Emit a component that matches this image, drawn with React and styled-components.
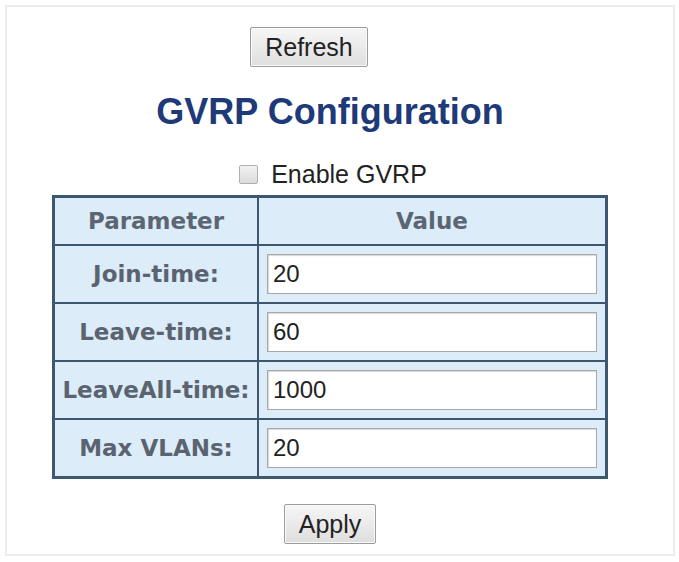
import React from "react";
import styled, { createGlobalStyle } from "styled-components";

const Global = createGlobalStyle`
  html, body { margin: 0; padding: 0; background: #ffffff; }
  body { font-family: "Liberation Sans", Arial, sans-serif; }
`;

const Frame = styled.div`
  box-sizing: border-box;
  margin: 5px 4px 0 5px;
  height: 551px;
  border: 2px solid #ececec;
  display: flex;
  flex-direction: column;
  align-items: center;
  padding-right: 20px;
`;

const Button = styled.button`
  box-sizing: border-box;
  height: 40px;
  padding: 0 14px;
  font-family: "Liberation Sans", Arial, sans-serif;
  font-size: 25px;
  color: #222;
  background: linear-gradient(#f6f6f6, #dedede);
  border: 1px solid #9c9c9c;
  border-radius: 2px;
  box-shadow: inset 0 0 0 1px #fafafa;
  margin-top: ${(p) => p.$top}px;
  margin-right: ${(p) => p.$shift || 0}px;
`;

const Title = styled.h1`
  margin: 25px 0 0 0;
  font-size: 36px;
  line-height: 40px;
  font-weight: bold;
  color: #1e3a78;
`;

const EnableRow = styled.label`
  display: flex;
  align-items: center;
  gap: 13px;
  margin-top: 27px;
  margin-left: 6px;
  font-size: 25px;
  line-height: 30px;
  color: #222;
`;

const Box = styled.span`
  box-sizing: border-box;
  width: 19px;
  height: 19px;
  border: 1px solid #b0b0b0;
  border-radius: 2px;
  background: linear-gradient(#f2f2f2, #dcdcdc);
`;

const Table = styled.table`
  margin-top: 6px;
  width: 556px;
  border-collapse: collapse;
  border: 3px solid #3d5770;
  background: #dcedf9;
  font-family: "DejaVu Sans", Verdana, sans-serif;
`;

const Head = styled.th`
  height: 46px;
  padding: 0;
  border: 2px solid #3d5770;
  font-size: 23px;
  font-weight: bold;
  color: #5c6673;
  width: ${(p) => p.$w || "auto"};
`;

const Label = styled.td`
  height: 56px;
  padding: 0;
  border: 2px solid #3d5770;
  text-align: center;
  font-size: 23px;
  font-weight: bold;
  color: #5a636f;
`;

const ValueCell = styled.td`
  padding: 0 8px;
  border: 2px solid #3d5770;
`;

const Field = styled.input`
  box-sizing: border-box;
  display: block;
  width: 100%;
  height: 40px;
  padding: 0 5px;
  font-family: "Liberation Sans", Arial, sans-serif;
  font-size: 24px;
  color: #222;
  background: #fff;
  border: 1px solid #a8a8a8;
  box-shadow: inset 1px 1px 1px #d8d8d8;
`;

const rows = [
  ["Join-time:", "20"],
  ["Leave-time:", "60"],
  ["LeaveAll-time:", "1000"],
  ["Max VLANs:", "20"],
];

export default function App() {
  return (
    <>
      <Global />
      <Frame>
        <Button $top={20} $shift={42}>Refresh</Button>
        <Title>GVRP Configuration</Title>
        <EnableRow>
          <Box />
          Enable GVRP
        </EnableRow>
        <Table>
          <thead>
            <tr>
              <Head $w="202px">Parameter</Head>
              <Head>Value</Head>
            </tr>
          </thead>
          <tbody>
            {rows.map(([k, v]) => (
              <tr key={k}>
                <Label>{k}</Label>
                <ValueCell>
                  <Field defaultValue={v} />
                </ValueCell>
              </tr>
            ))}
          </tbody>
        </Table>
        <Button $top={25}>Apply</Button>
      </Frame>
    </>
  );
}
